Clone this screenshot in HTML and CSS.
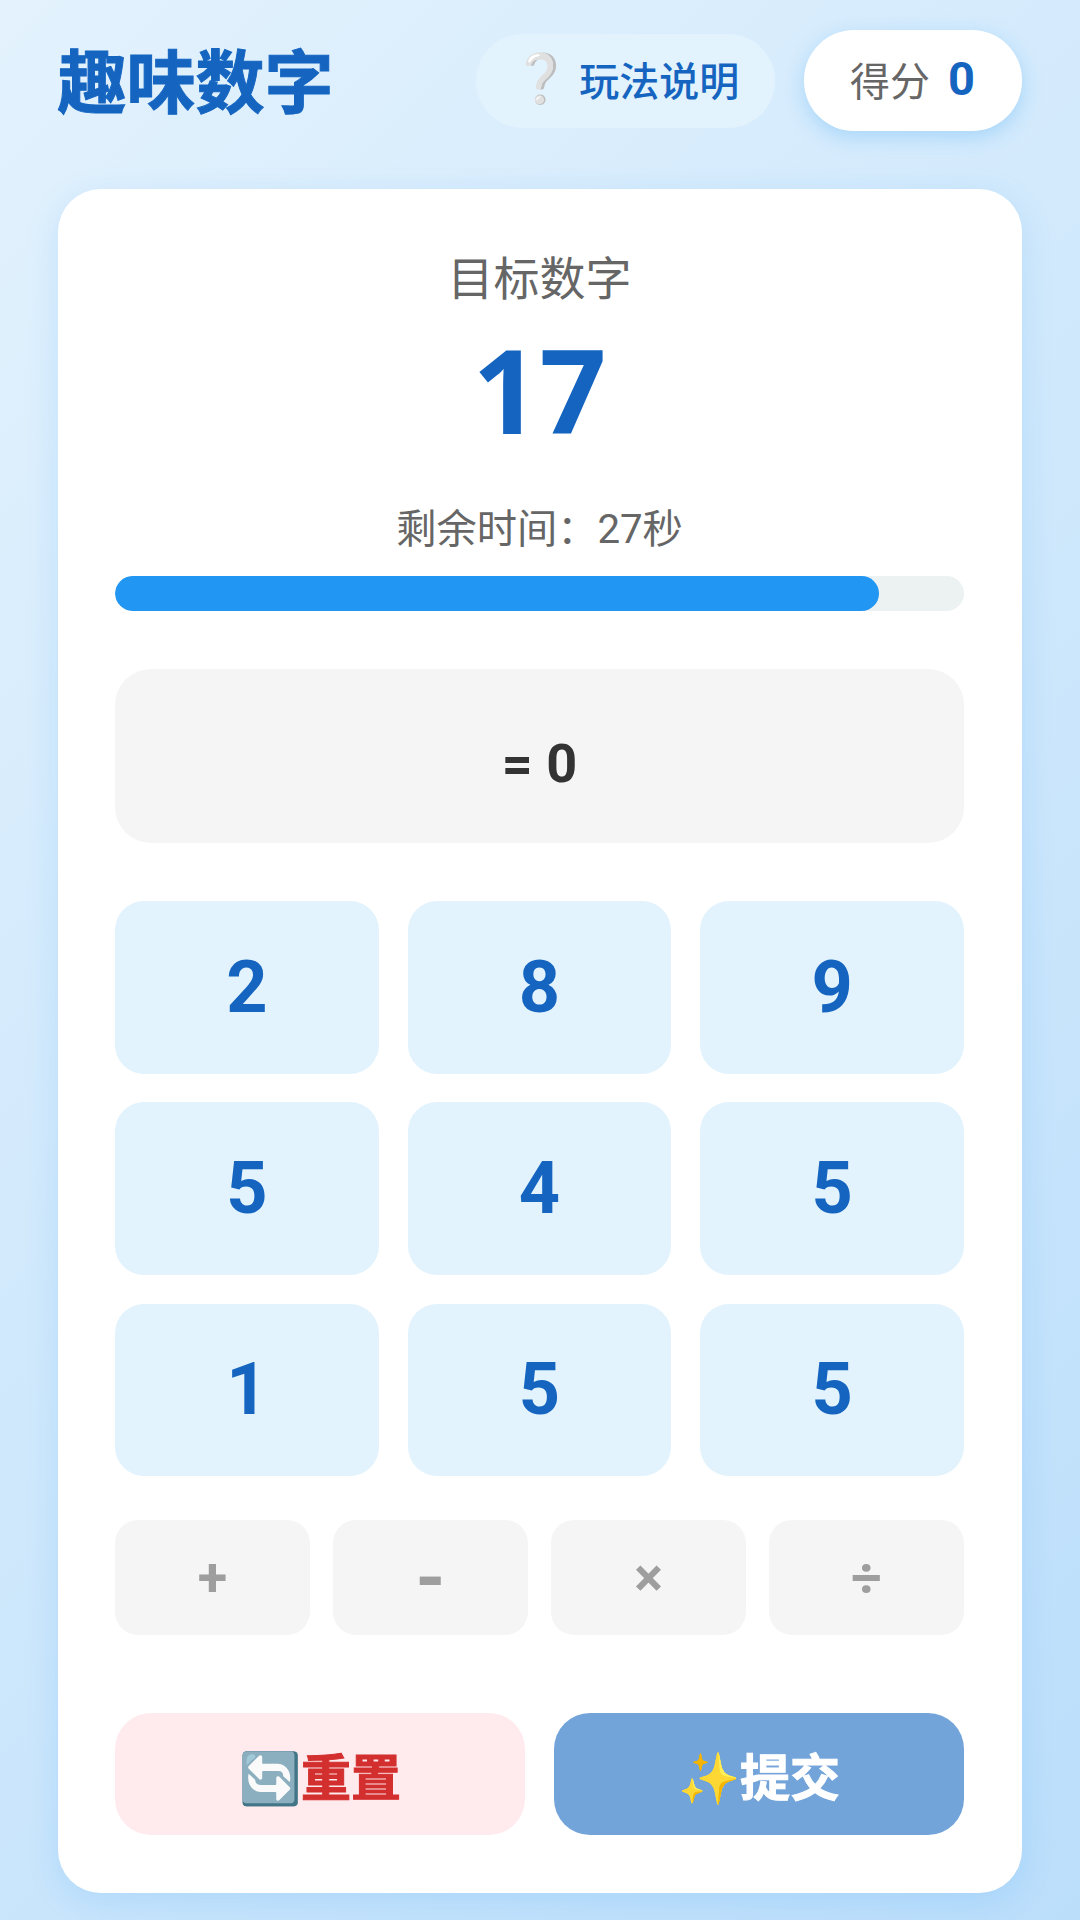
FILE: index.html
```html
<!DOCTYPE html>
<html lang="zh-CN">
<head>
    <meta charset="UTF-8">
    <title>趣味数字</title>
    <link rel="stylesheet" href="styles.css">
</head>
<body>
    <header class="top-bar">
        <h1 class="title">趣味数字</h1>
        <div class="top-actions">
            <button class="help-btn"><span class="help-icon">❔</span>玩法说明</button>
            <div class="score-box">得分<span class="score-value">0</span></div>
        </div>
    </header>

    <main class="game-card">
        <div class="target-label">目标数字</div>
        <div class="target-value">17</div>
        <div class="time-label">剩余时间：27秒</div>
        <div class="progress">
            <div class="progress-fill" style="width: 90%"></div>
        </div>

        <div class="expression">= 0</div>

        <div class="numbers">
            <button class="num-btn">2</button>
            <button class="num-btn">8</button>
            <button class="num-btn">9</button>
            <button class="num-btn">5</button>
            <button class="num-btn">4</button>
            <button class="num-btn">5</button>
            <button class="num-btn">1</button>
            <button class="num-btn">5</button>
            <button class="num-btn">5</button>
        </div>

        <div class="operators">
            <button class="op-btn">+</button>
            <button class="op-btn op-minus">-</button>
            <button class="op-btn">×</button>
            <button class="op-btn">÷</button>
        </div>

        <div class="actions">
            <button class="action-btn reset-btn">🔄重置</button>
            <button class="action-btn submit-btn">✨提交</button>
        </div>
    </main>
</body>
</html>
```

FILE: styles.css
```css
* {
    box-sizing: border-box;
}

html, body {
    height: 100%;
}

body {
    margin: 0;
    padding: 30px 58.5px 0 57.5px;
    font-family: Roboto, "Noto Sans CJK SC", sans-serif;
    background: linear-gradient(135deg, #e3f2fd, #bbdefb);
    overflow: hidden;
}

button {
    font-family: inherit;
    border: none;
    padding: 0;
}

.top-bar {
    display: flex;
    justify-content: space-between;
    align-items: center;
    height: 101px;
    margin-bottom: 58px;
}

.title {
    margin: 0;
    padding-top: 8px;
    font-size: 69px;
    font-weight: 700;
    line-height: 92px;
    color: #1565c0;
    -webkit-text-stroke: 1px #1565c0;
}

.top-actions {
    display: flex;
    align-items: center;
    gap: 28.75px;
}

.help-btn {
    display: flex;
    align-items: center;
    justify-content: center;
    gap: 8px;
    width: 299px;
    height: 94px;
    padding-bottom: 4px;
    border-radius: 47px;
    background: #e2f3fd;
    color: #1565c0;
    font-size: 40px;
    font-weight: 500;
}

.help-icon {
    font-size: 48px;
}

.score-box {
    display: flex;
    align-items: center;
    justify-content: center;
    gap: 18px;
    width: 218px;
    height: 101px;
    padding-bottom: 4px;
    border-radius: 50px;
    background: #fff;
    color: #666;
    font-size: 40px;
    box-shadow: 0 6px 20px rgba(33, 150, 243, 0.25);
}

.score-value {
    color: #1565c0;
    font-size: 47px;
    font-weight: 700;
}

.game-card {
    height: 1704px;
    padding: 63px 57.5px 57.5px;
    border-radius: 43px;
    background: #fff;
    box-shadow: 0 8px 32px rgba(33, 150, 243, 0.15);
    text-align: center;
}

.target-label {
    font-size: 46px;
    line-height: 54px;
    color: #666;
}

.target-value {
    margin-top: 18px;
    font-family: "Noto Sans", sans-serif;
    font-size: 117px;
    line-height: 130px;
    font-weight: 700;
    color: #1565c0;
}

.time-label {
    margin-top: 52px;
    font-size: 40.25px;
    line-height: 48px;
    color: #666;
}

.progress {
    height: 35px;
    margin-top: 22px;
    border-radius: 18px;
    background: #ecf1f2;
    overflow: hidden;
}

.progress-fill {
    height: 100%;
    border-radius: 18px;
    background: #2196f3;
}

.expression {
    display: flex;
    align-items: center;
    justify-content: center;
    height: 174px;
    margin-top: 58px;
    padding-top: 14px;
    border-radius: 36px;
    background: #f5f5f5;
    color: #333;
    font-size: 54px;
    font-weight: 700;
}

.numbers {
    display: grid;
    grid-template-columns: repeat(3, 1fr);
    gap: 28.75px;
    margin-top: 58px;
}

.num-btn {
    height: 172.5px;
    border-radius: 29px;
    background: #e2f3fd;
    color: #1565c0;
    font-size: 72px;
    font-weight: 700;
}

.operators {
    display: grid;
    grid-template-columns: repeat(4, 1fr);
    gap: 23px;
    margin-top: 44px;
}

.op-btn {
    height: 115px;
    border-radius: 23px;
    background: #f5f5f5;
    color: #9e9e9e;
    font-size: 54px;
    font-weight: 700;
}

.op-minus {
    font-size: 76px;
}

.actions {
    display: grid;
    grid-template-columns: 1fr 1fr;
    gap: 28.75px;
    margin-top: 78px;
}

.action-btn {
    height: 122px;
    border-radius: 36px;
    font-size: 50px;
    font-weight: 700;
    -webkit-text-stroke: 1px currentColor;
}

.reset-btn {
    background: #ffebee;
    color: #d32f2f;
}

.submit-btn {
    background: #72a3d9;
    color: #fff;
}
```
